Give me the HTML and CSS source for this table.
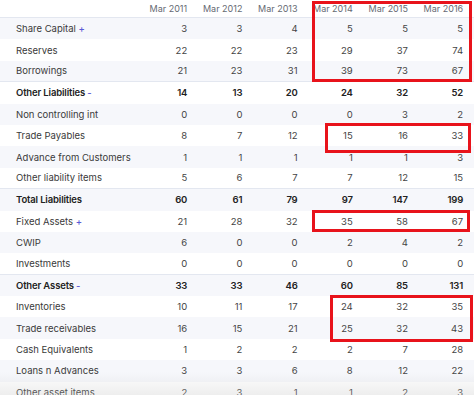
FILE: index.html
```html
<!DOCTYPE html>
<html>
<head>
<meta charset="utf-8">
<link rel="stylesheet" href="styles.css">
</head>
<body>
<div class="sheet">
  <div class="row head">
    <div class="label"></div>
    <div class="num">Mar 2011</div><div class="num">Mar 2012</div><div class="num">Mar 2013</div><div class="num">Mar 2014</div><div class="num">Mar 2015</div><div class="num">Mar 2016</div>
  </div>
  <div class="row alt"><div class="label">Share Capital <span class="tog">+</span></div><div class="num">3</div><div class="num">3</div><div class="num">4</div><div class="num">5</div><div class="num">5</div><div class="num">5</div></div>
  <div class="row"><div class="label">Reserves</div><div class="num">22</div><div class="num">22</div><div class="num">23</div><div class="num">29</div><div class="num">37</div><div class="num">74</div></div>
  <div class="row alt sep"><div class="label">Borrowings</div><div class="num">21</div><div class="num">23</div><div class="num">31</div><div class="num">39</div><div class="num">73</div><div class="num">67</div></div>
  <div class="row bold"><div class="label">Other Liabilities <span class="tog">-</span></div><div class="num">14</div><div class="num">13</div><div class="num">20</div><div class="num">24</div><div class="num">32</div><div class="num">52</div></div>
  <div class="row alt"><div class="label">Non controlling int</div><div class="num">0</div><div class="num">0</div><div class="num">0</div><div class="num">0</div><div class="num">3</div><div class="num">2</div></div>
  <div class="row"><div class="label">Trade Payables</div><div class="num">8</div><div class="num">7</div><div class="num">12</div><div class="num">15</div><div class="num">16</div><div class="num">33</div></div>
  <div class="row alt"><div class="label">Advance from Customers</div><div class="num">1</div><div class="num">1</div><div class="num">1</div><div class="num">1</div><div class="num">1</div><div class="num">3</div></div>
  <div class="row sep"><div class="label">Other liability items</div><div class="num">5</div><div class="num">6</div><div class="num">7</div><div class="num">7</div><div class="num">12</div><div class="num">15</div></div>
  <div class="row alt bold"><div class="label">Total Liabilities</div><div class="num">60</div><div class="num">61</div><div class="num">79</div><div class="num">97</div><div class="num">147</div><div class="num">199</div></div>
  <div class="row"><div class="label">Fixed Assets <span class="tog">+</span></div><div class="num">21</div><div class="num">28</div><div class="num">32</div><div class="num">35</div><div class="num">58</div><div class="num">67</div></div>
  <div class="row alt"><div class="label">CWIP</div><div class="num">6</div><div class="num">0</div><div class="num">0</div><div class="num">2</div><div class="num">4</div><div class="num">2</div></div>
  <div class="row sep"><div class="label">Investments</div><div class="num">0</div><div class="num">0</div><div class="num">0</div><div class="num">0</div><div class="num">0</div><div class="num">0</div></div>
  <div class="row alt bold"><div class="label">Other Assets <span class="tog">-</span></div><div class="num">33</div><div class="num">33</div><div class="num">46</div><div class="num">60</div><div class="num">85</div><div class="num">131</div></div>
  <div class="row"><div class="label">Inventories</div><div class="num">10</div><div class="num">11</div><div class="num">17</div><div class="num">24</div><div class="num">32</div><div class="num">35</div></div>
  <div class="row alt"><div class="label">Trade receivables</div><div class="num">16</div><div class="num">15</div><div class="num">21</div><div class="num">25</div><div class="num">32</div><div class="num">43</div></div>
  <div class="row"><div class="label">Cash Equivalents</div><div class="num">1</div><div class="num">2</div><div class="num">2</div><div class="num">2</div><div class="num">7</div><div class="num">28</div></div>
  <div class="row alt"><div class="label">Loans n Advances</div><div class="num">3</div><div class="num">3</div><div class="num">6</div><div class="num">8</div><div class="num">12</div><div class="num">22</div></div>
  <div class="row"><div class="label">Other asset items</div><div class="num">2</div><div class="num">3</div><div class="num">1</div><div class="num">1</div><div class="num">2</div><div class="num">3</div></div>

  <div class="mark m1"></div>
  <div class="mark m2"></div>
  <div class="mark m3"></div>
  <div class="mark m4"></div>
  <div class="shade"></div>
</div>
</body>
</html>
```

FILE: styles.css
```css
html, body {
  margin: 0;
  padding: 0;
  background: #ffffff;
}
body {
  font-family: Inter, "Noto Sans", sans-serif;
  font-size: 9.5px;
  color: #3a3a3a;
  width: 474px;
  height: 395px;
  overflow: hidden;
}
.sheet {
  position: relative;
  width: 474px;
}
.row {
  display: grid;
  grid-template-columns: 132px repeat(6, 55.2px);
  align-items: center;
  height: 21.4px;
  box-sizing: border-box;
}
.row.head {
  height: 18px;
  border-bottom: 1px solid #e3e7f0;
  color: #666a73;
  font-size: 9px;
}
.row.alt {
  background: #f6f7fb;
}
.row.sep {
  border-bottom: 1px solid #e3e7f0;
}
.label {
  padding-left: 16px;
  white-space: nowrap;
}
.num {
  text-align: right;
  color: #444;
}
.head .num {
  color: #666a73;
}
.bold .label,
.bold .num {
  font-weight: 600;
  letter-spacing: -0.15px;
  color: #222;
}
.tog {
  color: #5b5bd6;
  font-weight: 500;
}
.mark {
  position: absolute;
  border: 3px solid #e8131b;
  box-sizing: border-box;
}
.m1 { left: 312px; top: 1px; width: 160px; height: 81px; }
.m2 { left: 325px; top: 123px; width: 146px; height: 30px; }
.m3 { left: 312px; top: 210px; width: 158px; height: 22px; }
.m4 { left: 330px; top: 295px; width: 143px; height: 47px; }
.shade {
  position: absolute;
  left: 0;
  right: 0;
  top: 372px;
  height: 30px;
  background: linear-gradient(to bottom, rgba(200,200,200,0), rgba(190,190,190,0.35));
  pointer-events: none;
}
```
